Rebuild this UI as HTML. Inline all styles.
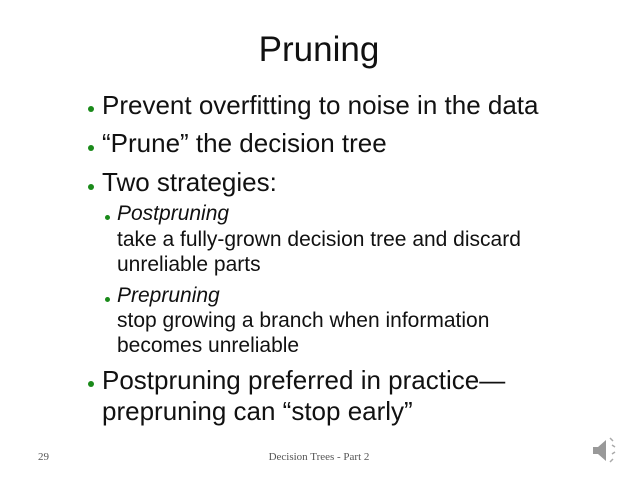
<!DOCTYPE html>
<html><head><meta charset="utf-8"><style>
body{margin:0;width:638px;height:479px;background:#fff;position:relative;overflow:hidden;font-family:"Liberation Sans",sans-serif;color:#111}
.l{position:absolute;white-space:nowrap;line-height:1}
.b{position:absolute;border-radius:50%;background:#1a8a1a}
.t{font-size:26px}
.s{font-size:21px}
.f{font-family:"Liberation Serif",serif;font-size:11px;color:#555}
</style></head><body>
<div class="l" style="left:0;width:638px;text-align:center;top:32px;font-size:35px">Pruning</div>

<div class="b" style="left:88px;top:106px;width:6px;height:6px"></div>
<div class="l t" style="left:102px;top:92px">Prevent overfitting to noise in the data</div>
<div class="b" style="left:88px;top:145px;width:6px;height:6px"></div>
<div class="l t" style="left:102px;top:130px">“Prune” the decision tree</div>
<div class="b" style="left:88px;top:184px;width:6px;height:6px"></div>
<div class="l t" style="left:102px;top:169px">Two strategies:</div>

<div class="b" style="left:105px;top:215px;width:5px;height:5px"></div>
<div class="l s" style="left:117px;top:203px;font-style:italic">Postpruning</div>
<div class="l s" style="left:117px;top:229px">take a fully-grown decision tree and discard</div>
<div class="l s" style="left:117px;top:254px">unreliable parts</div>
<div class="b" style="left:105px;top:297px;width:5px;height:5px"></div>
<div class="l s" style="left:117px;top:285px;font-style:italic">Prepruning</div>
<div class="l s" style="left:117px;top:310px">stop growing a branch when information</div>
<div class="l s" style="left:117px;top:335px">becomes unreliable</div>

<div class="b" style="left:88px;top:381px;width:6px;height:6px"></div>
<div class="l t" style="left:102px;top:367px">Postpruning preferred in practice—</div>
<div class="l t" style="left:102px;top:398px">prepruning can “stop early”</div>

<div class="l f" style="left:38px;top:452px">29</div>
<div class="l f" style="left:0;width:638px;text-align:center;top:452px">Decision Trees - Part 2</div>
<svg style="position:absolute;left:590px;top:430px" width="40" height="40" viewBox="0 0 40 40">
<polygon points="3,17 8,17 16,10 16,31 8,24 3,24" fill="#999"/>
<g stroke="#aaa" stroke-width="1.5" fill="none"><path d="M20,8 l3,3"/><path d="M22,15 l3,2"/><path d="M22,24 l3,-2"/><path d="M20,32 l3,-3"/></g>
</svg>
</body></html>
